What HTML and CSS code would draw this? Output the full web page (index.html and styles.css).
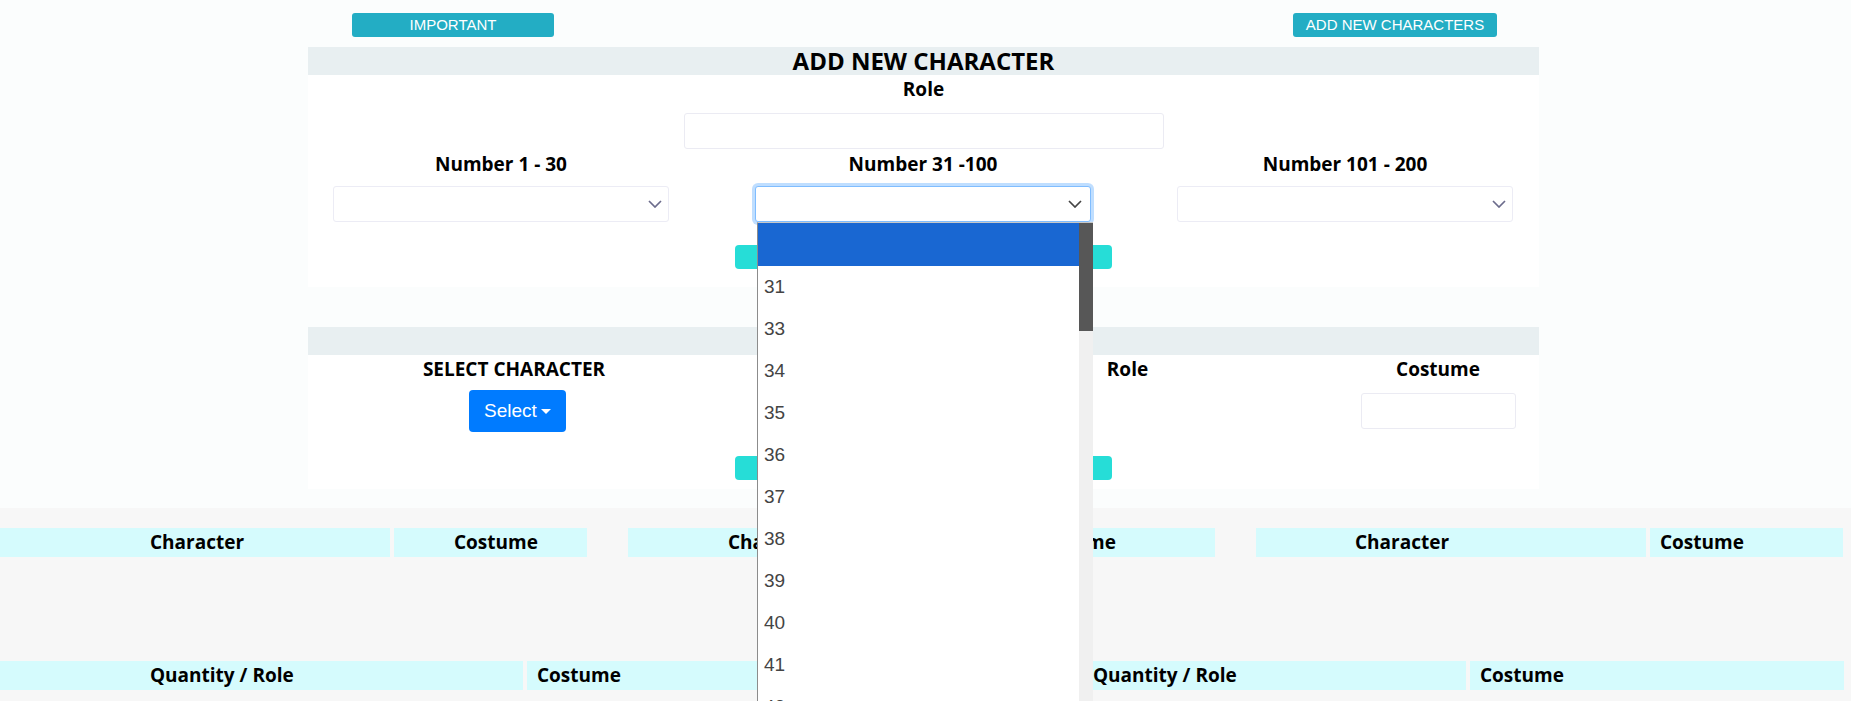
FILE: index.html
```html
<!DOCTYPE html>
<html lang="en">
<head>
<meta charset="utf-8">
<title>Add New Character</title>
<link rel="stylesheet" href="styles.css">
</head>
<body>
<div class="top">
  <div class="container">
    <div class="toolbar">
      <button class="btn-info btn-important" type="button">IMPORTANT</button>
      <button class="btn-info btn-add" type="button">ADD NEW CHARACTERS</button>
    </div>

    <section class="panel">
      <h2 class="panel-title">ADD NEW CHARACTER</h2>
      <div class="panel-body panel-body-add">
        <div class="field-role">
          <label class="label">Role</label>
          <input class="input input-role" type="text">
        </div>
        <div class="number-grid">
          <div class="field">
            <label class="label">Number 1 - 30</label>
            <div class="select-box">
              <svg class="chevron" width="14" height="8" viewBox="0 0 14 8"><path d="M1 1l6 6 6-6" fill="none" stroke="currentColor" stroke-width="1.7"/></svg>
            </div>
          </div>
          <div class="field">
            <label class="label">Number 31 -100</label>
            <div class="select-box is-focused">
              <svg class="chevron" width="14" height="8" viewBox="0 0 14 8"><path d="M1 1l6 6 6-6" fill="none" stroke="currentColor" stroke-width="1.7"/></svg>
              <div class="select-popup">
                <ul class="options">
                  <li class="option is-selected">&nbsp;</li>
                  <li class="option">31</li>
                  <li class="option">33</li>
                  <li class="option">34</li>
                  <li class="option">35</li>
                  <li class="option">36</li>
                  <li class="option">37</li>
                  <li class="option">38</li>
                  <li class="option">39</li>
                  <li class="option">40</li>
                  <li class="option">41</li>
                  <li class="option">42</li>
                </ul>
                <div class="scrollbar"><div class="scrollbar-thumb"></div></div>
              </div>
            </div>
          </div>
          <div class="field">
            <label class="label">Number 101 - 200</label>
            <div class="select-box">
              <svg class="chevron" width="14" height="8" viewBox="0 0 14 8"><path d="M1 1l6 6 6-6" fill="none" stroke="currentColor" stroke-width="1.7"/></svg>
            </div>
          </div>
        </div>
        <div class="actions"><button class="btn-teal" type="button" aria-label="Add"></button></div>
      </div>
    </section>

    <section class="panel panel-second">
      <h2 class="panel-title"></h2>
      <div class="panel-body panel-body-select">
        <div class="select-grid">
          <div class="field">
            <label class="label">SELECT CHARACTER</label>
            <button class="btn-primary" type="button">Select</button>
          </div>
          <div class="field"></div>
          <div class="field">
            <label class="label">Role</label>
          </div>
          <div class="field">
            <label class="label">Costume</label>
            <input class="input input-costume" type="text">
          </div>
        </div>
        <div class="actions actions-second"><button class="btn-teal" type="button" aria-label="Add"></button></div>
      </div>
    </section>
  </div>
</div>

<div class="bottom">
  <div class="head-row">
    <div class="thead">
      <div class="th th-char t1-char">Character</div>
      <div class="th th-cost t1-cost">Costume</div>
    </div>
    <div class="thead">
      <div class="th th-char t2-char">Character</div>
      <div class="th th-cost t2-cost">Costume</div>
    </div>
    <div class="thead">
      <div class="th th-char t3-char">Character</div>
      <div class="th th-cost t3-cost">Costume</div>
    </div>
  </div>
  <div class="head-row head-row-second">
    <div class="th qr-left">Quantity / Role</div>
    <div class="th cost-left">Costume</div>
    <div class="th qr-right">Quantity / Role</div>
    <div class="th cost-right">Costume</div>
  </div>
</div>
</body>
</html>
```

FILE: styles.css
```css
html, body {
  margin: 0;
  padding: 0;
  overflow: hidden;
}

body {
  font-family: "Open Sans", "Liberation Sans", sans-serif;
  color: #000;
  background: #f7f7f7;
}

.top {
  background: #fbfdfd;
  padding: 13px 0 19px;
}

.container {
  width: 1231px;
  margin: 0 0 0 calc(50% - 617.5px);
}

.toolbar {
  display: flex;
  justify-content: space-between;
  padding: 0 42px 0 44px;
  height: 24px;
  margin-bottom: 10px;
}

.btn-info {
  height: 24px;
  padding: 0;
  border: 0;
  border-radius: 3px;
  background: #23adc4;
  color: #fff;
  font-family: "Liberation Sans", Arial, sans-serif;
  font-size: 15px;
  line-height: 24px;
}

.btn-important { width: 202px; }
.btn-add { width: 204px; }

.panel-title {
  margin: 0;
  height: 28px;
  line-height: 28px;
  background: #e8eff1;
  text-align: center;
  font-size: 24px;
  font-weight: 700;
}

.panel-body {
  background: #fff;
}

.panel-body-add {
  padding: 2px 0 18px;
}

.panel-second {
  margin-top: 40px;
}

.panel-body-select {
  padding: 2px 0 9px;
}

.label {
  display: block;
  font-size: 19px;
  font-weight: 700;
  line-height: 24px;
  text-align: center;
}

.field-role {
  display: flex;
  flex-direction: column;
  align-items: center;
}

.input {
  box-sizing: border-box;
  height: 36px;
  border: 1px solid #ebebf3;
  border-radius: 3px;
  background: #fff;
  margin: 0;
  outline: none;
}

.input-role {
  width: 480px;
  margin-top: 12px;
}

.number-grid {
  display: grid;
  grid-template-columns: repeat(3, 1fr);
  margin: 3px -17px 0 -18px;
}

.field {
  display: flex;
  flex-direction: column;
  align-items: center;
}

.select-box {
  box-sizing: border-box;
  width: 336px;
  height: 36px;
  margin-top: 10px;
  border: 1px solid #ececf5;
  border-radius: 3px;
  background: #fff;
  display: flex;
  align-items: center;
  justify-content: flex-end;
  padding-right: 6px;
  color: #6c6c8c;
}

.select-box.is-focused {
  position: relative;
  border-color: #80bdff;
  box-shadow: 0 0 0 3px rgba(0, 123, 255, 0.25);
  color: #444;
  padding-right: 8px;
}

.chevron {
  display: block;
}

.select-popup {
  position: absolute;
  top: calc(100% + 1px);
  left: 1px;
  width: 336px;
  height: 479px;
  box-sizing: border-box;
  border: 1px solid #8c8c8c;
  border-top-color: #c8c8c8;
  border-right: 0;
  border-bottom: 0;
  background: #fff;
  display: flex;
  overflow: hidden;
  z-index: 10;
}

.options {
  flex: 1;
  list-style: none;
  margin: 0;
  padding: 0;
}

.option {
  height: 42px;
  line-height: 42px;
  padding-left: 6px;
  font-family: "Liberation Sans", Arial, sans-serif;
  font-size: 19px;
  color: #444;
}

.option.is-selected {
  height: 43px;
  background: #1967d2;
}

.scrollbar {
  width: 14px;
  background: #f0f0f0;
}

.scrollbar-thumb {
  height: 108px;
  background: #575757;
}

.actions {
  display: flex;
  justify-content: center;
  margin-top: 23px;
}

.actions-second {
  margin-top: 24px;
}

.btn-teal {
  width: 377px;
  height: 24px;
  padding: 0;
  border: 0;
  border-radius: 4px;
  background: #26ddd7;
}

.select-grid {
  display: grid;
  grid-template-columns: 412px 198px 419px 202px;
}

.btn-primary {
  margin: 9px 0 0 7px;
  width: 97px;
  height: 42px;
  padding: 0;
  border: 0;
  border-radius: 4px;
  background: #007bff;
  color: #fff;
  font-family: "Liberation Sans", Arial, sans-serif;
  font-size: 19px;
  display: flex;
  align-items: center;
  justify-content: center;
}

.btn-primary::after {
  content: "";
  margin-left: 4px;
  border-top: 5px solid #fff;
  border-left: 5px solid transparent;
  border-right: 5px solid transparent;
}

.input-costume {
  width: 155px;
  margin-top: 12px;
}

.bottom {
  box-sizing: border-box;
  height: 193px;
  padding-top: 20px;
  background: #f7f7f7;
}

.head-row {
  display: flex;
  gap: 41px;
}

.head-row-second {
  gap: 4px;
  margin-top: 104px;
}

.thead {
  display: flex;
  gap: 4px;
}

.th {
  box-sizing: border-box;
  height: 29px;
  line-height: 29px;
  background: #d5fbfd;
  font-size: 19px;
  font-weight: 700;
  white-space: nowrap;
}

.th-char { width: 390px; }
.th-cost { width: 193px; }

.t1-char { padding-left: 150px; }
.t1-cost { padding-left: 60px; }
.t2-char { padding-left: 100px; }
.t2-cost { padding-left: 10px; }
.t3-char { padding-left: 99px; }
.t3-cost { padding-left: 10px; }

.qr-left { width: 523px; padding-left: 150px; }
.cost-left { width: 552px; padding-left: 10px; }
.qr-right { width: 383px; padding-left: 10px; }
.cost-right { width: 374px; padding-left: 10px; }
```
